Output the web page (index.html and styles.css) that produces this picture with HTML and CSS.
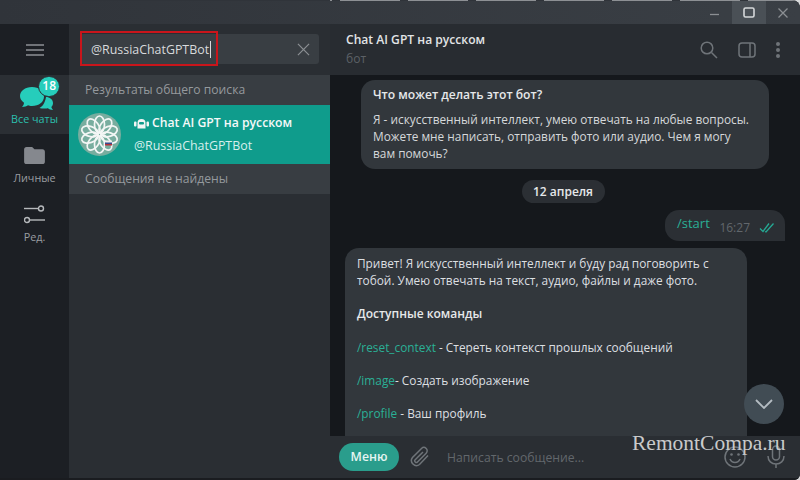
FILE: index.html
```html
<!DOCTYPE html>
<html lang="ru">
<head>
<meta charset="utf-8">
<title>Chat AI GPT на русском</title>
<link rel="stylesheet" href="styles.css">
</head>
<body>
<div class="window">
  <div class="edge-top"></div>
  <header class="titlebar">
    <div class="winbtn"><svg width="12" height="12" viewBox="0 0 12 12"><path d="M1 7.500h9" class="ico-dim"/></svg></div>
    <div class="winbtn winbtn-active"><svg width="14" height="14" viewBox="0 0 14 14"><rect x="2" y="2" width="10" height="9" rx="1.500" class="ico-light"/></svg></div>
    <div class="winbtn"><svg width="12" height="12" viewBox="0 0 12 12"><path d="M1.500 1.500l9 9M10.500 1.500l-9 9" class="ico-dim"/></svg></div>
  </header>
  <div class="main">
    <nav class="rail">
      <div class="rail-menu">
        <svg width="18" height="12" viewBox="0 0 18 12"><path d="M0 1h18M0 6h18M0 11h18" class="ico-menu"/></svg>
      </div>
      <div class="folder folder-active">
        <div class="folder-icon">
          <svg width="38" height="30" viewBox="0 0 38 30"><path d="M12 6c7 0 12 4 12 9.500S19 25 12 25c-2 0-3-.3-4-.7-1.500 1.200-3.500 1.700-6 1.700 1.200-1.200 1.900-2.700 2-4.300-2.400-1.700-4-4-4-6.700C0 10 5 6 12 6z" class="fill-teal" transform="translate(1 0)"/><path d="M27 16c3.500 0 7 2.500 7 6 0 1.700-.6 3-1.700 4 .3 1 1 2 1.700 3-2 0-4-.7-5-1.700-1 .2-6 .5-8.500-.3 3-1.500 5.500-5 6.500-11z" class="fill-teal"/></svg>
          <span class="badge">18</span>
        </div>
        <span class="folder-label">Все чаты</span>
      </div>
      <div class="folder">
        <div class="folder-icon">
          <svg width="21" height="17" viewBox="0 0 22 18"><path d="M2.500 0h6l2.500 2.500h8.500c1.400 0 2.500 1 2.500 2.500v10.500c0 1.400-1 2.500-2.500 2.500h-17C1 18 0 17 0 15.500v-13C0 1 1 0 2.500 0z" class="fill-grey"/></svg>
        </div>
        <span class="folder-label">Личные</span>
      </div>
      <div class="folder">
        <div class="folder-icon">
          <svg width="21" height="19" viewBox="0 0 21 19"><path d="M0 3.500h14" class="ico-rail"/><circle cx="17" cy="3.500" r="2.500" class="ico-rail"/><path d="M6 15h15" class="ico-rail"/><circle cx="3" cy="15" r="2.500" class="ico-rail"/></svg>
        </div>
        <span class="folder-label">Ред.</span>
      </div>
    </nav>

    <aside class="panel">
      <div class="searchbar">
        <div class="searchbox">
          <span class="search-text">@RussiaChatGPTBot</span><span class="caret"></span>
          <svg class="search-clear" width="13" height="13" viewBox="0 0 14 14"><path d="M1 1l12 12M13 1L1 13" class="ico-dim"/></svg>
        </div>
        <div class="highlight"></div>
      </div>
      <div class="section-title">Результаты общего поиска</div>
      <div class="result">
        <div class="avatar">
          <svg width="43" height="43" viewBox="0 0 43 43">
            <circle cx="21.500" cy="21.500" r="21.500" class="avatar-bg"/>
            <g class="knot">
              <ellipse cx="21.500" cy="11.500" rx="5" ry="8.500"/>
              <ellipse cx="21.500" cy="11.500" rx="5" ry="8.500" transform="rotate(36 21.500 21.500)"/>
              <ellipse cx="21.500" cy="11.500" rx="5" ry="8.500" transform="rotate(72 21.500 21.500)"/>
              <ellipse cx="21.500" cy="11.500" rx="5" ry="8.500" transform="rotate(108 21.500 21.500)"/>
              <ellipse cx="21.500" cy="11.500" rx="5" ry="8.500" transform="rotate(144 21.500 21.500)"/>
              <ellipse cx="21.500" cy="11.500" rx="5" ry="8.500" transform="rotate(180 21.500 21.500)"/>
              <ellipse cx="21.500" cy="11.500" rx="5" ry="8.500" transform="rotate(216 21.500 21.500)"/>
              <ellipse cx="21.500" cy="11.500" rx="5" ry="8.500" transform="rotate(252 21.500 21.500)"/>
              <ellipse cx="21.500" cy="11.500" rx="5" ry="8.500" transform="rotate(288 21.500 21.500)"/>
              <ellipse cx="21.500" cy="11.500" rx="5" ry="8.500" transform="rotate(324 21.500 21.500)"/>
            </g>
            <rect x="27" y="27.500" width="7" height="2" fill="#eeeeee"/>
            <rect x="27" y="29.500" width="7" height="1.500" fill="#3a4a8c"/>
            <rect x="27" y="31" width="7" height="1.500" fill="#b5303a"/>
          </svg>
        </div>
        <div class="result-text">
          <div class="result-name">
            <svg width="15" height="12" viewBox="0 0 15 12"><path d="M3.500 6a4 4 0 0 1 8 0v5.500h-8z" class="fill-white"/><rect x="0" y="4.500" width="2.500" height="5" rx="1" class="fill-white"/><rect x="12.500" y="4.500" width="2.500" height="5" rx="1" class="fill-white"/><rect x="5" y="5" width="5" height="2.500" rx="1" class="fill-teal-dark"/></svg>
            <span>Chat AI GPT на русском</span>
          </div>
          <div class="result-user">@RussiaChatGPTBot</div>
        </div>
      </div>
      <div class="section-title">Сообщения не найдены</div>
    </aside>

    <section class="chat">
      <header class="chat-header">
        <div class="chat-title">
          <div class="chat-name">Chat AI GPT на русском</div>
          <div class="chat-status">бот</div>
        </div>
        <div class="chat-actions">
          <svg width="18" height="18" viewBox="0 0 18 18"><circle cx="7" cy="7" r="5.800" class="ico-head"/><path d="M11.500 11.500L17 17" class="ico-head"/></svg>
          <svg width="18" height="16" viewBox="0 0 18 16"><rect x="1" y="1" width="16" height="14" rx="3" class="ico-head"/><path d="M12 1v14" class="ico-head"/></svg>
          <svg width="4" height="16" viewBox="0 0 4 16"><circle cx="2" cy="2" r="2" class="fill-head"/><circle cx="2" cy="8" r="2" class="fill-head"/><circle cx="2" cy="14" r="2" class="fill-head"/></svg>
        </div>
      </header>
      <div class="messages">
        <div class="card">
          <div class="card-title">Что может делать этот бот?</div>
          <div class="card-body">Я - искусственный интеллект, умею отвечать на любые вопросы. Можете мне написать, отправить фото или аудио. Чем я могу вам помочь?</div>
        </div>
        <div class="date-pill">12 апреля</div>
        <div class="outgoing">
          <span class="cmd">/start</span>
          <span class="time">16:27</span>
          <svg width="17" height="11" viewBox="0 0 17 11"><path d="M1 6.500L4 9.500 10 1.500M6 9.500L7 10 14.500 1.500" class="ico-check"/></svg>
        </div>
        <div class="bubble">
          <p>Привет! Я искусственный интеллект и буду рад поговорить с тобой. Умею отвечать на текст, аудио, файлы и даже фото.</p>
          <p class="strong">Доступные команды</p>
          <p><span class="cmd">/reset_context</span> - Стереть контекст прошлых сообщений</p>
          <p><span class="cmd">/image</span>- Создать изображение</p>
          <p><span class="cmd">/profile</span> - Ваш профиль</p>
        </div>
        <button class="scroll-down" type="button" aria-label="Вниз">
          <svg width="18" height="10" viewBox="0 0 18 10"><path d="M1 1l8 8 8-8" class="ico-chev"/></svg>
        </button>
      </div>
      <footer class="composer">
        <span class="menu-btn">Меню</span>
        <svg class="clip" width="20" height="22" viewBox="0 0 20 22"><path d="M18 9.500l-8.500 9a5 5 0 0 1-7-7L11.500 2.500a3.300 3.300 0 0 1 4.700 4.700L7.500 16a1.600 1.600 0 0 1-2.300-2.300L13 6" class="ico-head"/></svg>
        <span class="placeholder">Написать сообщение...</span>
        <svg class="smile" width="22" height="22" viewBox="0 0 22 22"><circle cx="11" cy="11" r="10" class="ico-head"/><circle cx="7.500" cy="8.500" r="1.300" class="fill-head"/><circle cx="14.500" cy="8.500" r="1.300" class="fill-head"/><path d="M6 13c1 2.500 3 3.500 5 3.500s4-1 5-3.500" class="ico-head"/></svg>
        <svg class="mic" width="18" height="24" viewBox="0 0 18 24"><rect x="5.500" y="1" width="7" height="14" rx="3.500" class="ico-head"/><path d="M1 11c0 5 3.500 8 8 8s8-3 8-8M9 19v4" class="ico-head"/></svg>
      </footer>
    </section>
  </div>
  <div class="edge-bottom"></div>
  <div class="watermark">RemontCompa.ru</div>
</div>
</body>
</html>
```
FILE: styles.css
```css
* { box-sizing: border-box; }
html, body { margin: 0; padding: 0; height: 100%; background: #d9dadb; }
body { font-family: "Open Sans", "Noto Sans", sans-serif; font-size: 13px; color: #e6e8ea; overflow: hidden; }
svg { display: block; flex: none; fill: none; }

.window { position: relative; width: 800px; height: 480px; background: #15181c; border-radius: 0 8px 6px 0; overflow: hidden; display: flex; flex-direction: column; }
.edge-top { height: 1px; flex: none; background: linear-gradient(90deg, #30343a 330px, rgba(0,0,0,0) 330px), repeating-linear-gradient(90deg, #8d9094 0 60px, #30343a 60px 68px); }
.edge-bottom { height: 2px; flex: none; background: #1a1c20; }

.titlebar { height: 23px; flex: none; display: flex; justify-content: flex-end; background: linear-gradient(90deg, #30343a, #3a3f45); }
.winbtn { width: 34px; display: flex; align-items: center; justify-content: center; }
.winbtn-active { background: #4a5056; }

.ico-dim { stroke: #8b8f93; stroke-width: 1.300; }
.ico-light { stroke: #d5d8da; stroke-width: 1.600; }
.ico-menu { stroke: #8c9094; stroke-width: 1.400; }
.ico-rail { stroke: #b6b9bc; stroke-width: 1.400; }
.ico-head { stroke: #6f7479; stroke-width: 1.500; }
.ico-check { stroke: #25a893; stroke-width: 1.300; }
.ico-chev { stroke: #b4bcc2; stroke-width: 1.800; }
.fill-teal { fill: #26cdbb; }
.fill-teal-dark { fill: #0f9c8c; }
.fill-grey { fill: #85888e; }
.fill-white { fill: #f2f5f5; }
.fill-head { fill: #6f7479; }

.main { flex: 1; min-height: 0; display: flex; }

.rail { width: 69px; flex: none; background: #1c1f24; display: flex; flex-direction: column; align-items: stretch; }
.rail-menu { height: 51px; display: flex; align-items: center; justify-content: center; }
.folder { height: 59px; display: flex; flex-direction: column; align-items: center; justify-content: flex-end; padding-bottom: 8px; }
.folder-active { background: #2b2f34; }
.folder-icon { position: relative; height: 30px; display: flex; align-items: center; justify-content: center; }
.folder-label { font-size: 10.800px; line-height: 15px; color: #9a9da1; }
.folder-active .folder-label { color: #2bbfad; }
.folder-active .folder-icon { margin-right: -7px; }
.badge { position: absolute; top: -5px; right: -3px; min-width: 21px; height: 21px; padding: 0 3px; border-radius: 11px; background: #26cdbb; border: 1.500px solid #2b2f34; color: #fff; font-size: 12px; font-weight: 600; line-height: 18px; text-align: center; }

.panel { width: 261px; flex: none; background: #2a2e33; display: flex; flex-direction: column; }
.searchbar { position: relative; height: 51px; padding: 10px 11px 11px 11px; }
.searchbox { height: 30px; background: #393e43; border-radius: 3px; display: flex; align-items: center; padding: 0 8px 0 11px; }
.search-text { font-size: 12.400px; color: #d8dadc; }
.caret { width: 1px; height: 17px; background: #d8dadc; margin-left: 1px; }
.search-clear { margin-left: auto; margin-right: 1px; }
.highlight { position: absolute; left: 11px; top: 7px; width: 138px; height: 35px; border: 2px solid #c9151b; }

.section-title { height: 30px; background: #383d42; color: #95999d; font-size: 12.150px; line-height: 30px; padding-left: 16px; }
.result { height: 59px; background: #0f9c8c; display: flex; align-items: center; padding-left: 9px; }
.avatar { width: 43px; height: 43px; flex: none; margin-right: 13px; }
.avatar-bg { fill: #78ad9f; }
.knot ellipse { fill: none; stroke: #f3f6f5; stroke-width: 1.700; }
.result-text { display: flex; flex-direction: column; gap: 5px; }
.result-name { display: flex; align-items: center; gap: 3px; font-weight: 600; font-size: 12.200px; line-height: 18px; color: #f5f8f8; }
.result-user { font-size: 12.400px; line-height: 18px; color: #d7efec; }

.chat { flex: 1; min-width: 0; display: flex; flex-direction: column; }
.chat-header { height: 51px; flex: none; background: #282c31; display: flex; align-items: center; justify-content: space-between; padding: 0 20px 0 16px; }
.chat-title { display: flex; flex-direction: column; gap: 1px; }
.chat-name { font-size: 12.100px; line-height: 18px; font-weight: 600; color: #e2e4e6; }
.chat-status { font-size: 12.100px; line-height: 18px; color: #5c6166; }
.chat-actions { display: flex; align-items: center; gap: 20px; }

.messages { position: relative; flex: 1; min-height: 0; overflow: hidden; display: flex; flex-direction: column; align-items: flex-start; padding: 5px 15px 0; background: #15181c; }
.card { margin-left: 16px; width: 408px; height: 89px; padding: 6px 14px 6px 12px; background: #32373c; border-radius: 14px; flex: none; }
.card-title { font-weight: 600; font-size: 12.100px; line-height: 18px; color: #e6e8ea; }
.card-body { margin-top: 7px; font-size: 11.850px; line-height: 17px; color: #d5d8da; }
.date-pill { align-self: center; margin-top: 11px; margin-left: -4px; width: 83px; height: 23px; border-radius: 12px; background: #2b2f34; font-size: 12px; font-weight: 600; line-height: 23px; text-align: center; color: #e6e8ea; flex: none; }
.outgoing { align-self: flex-end; margin-top: 7px; height: 31px; width: 120px; padding: 0 9px 0 12px; border-radius: 14px 14px 0 14px; background: #2b2f34; display: flex; align-items: center; flex: none; }
.outgoing .cmd { margin-top: -5px; }
.time { font-size: 12px; color: #62676c; margin-left: auto; margin-right: 9px; margin-top: 4px; }
.outgoing svg { margin-top: 4px; }
.cmd { color: #2ab096; }
.bubble { margin-top: 7px; width: 402px; flex: none; padding: 7px 12px 20px; background: #32373c; border-radius: 14px; font-size: 11.850px; line-height: 17px; color: #dcdfe1; }
.bubble p { margin: 0 0 16.300px; }
.bubble .strong { font-size: 12px; font-weight: 600; color: #e6e8ea; }
.scroll-down { position: absolute; right: 16px; top: 309px; width: 40px; height: 40px; padding: 0; border: 0; border-radius: 50%; background: #414c54; display: flex; align-items: center; justify-content: center; }

.composer { height: 42px; flex: none; background: #2a2e33; display: flex; align-items: center; padding: 0 15px 0 9px; }
.menu-btn { width: 60px; height: 28px; border-radius: 14px; background: #2a9d8c; color: #e6f5f2; font-weight: 600; font-size: 12.300px; line-height: 28px; text-align: center; }
.clip { margin-left: 11px; }
.placeholder { margin-left: 17px; font-size: 12.200px; color: #62676c; }
.smile { margin-left: auto; margin-right: 21px; }
.watermark { position: absolute; left: 632px; top: 430px; font-family: "Liberation Serif", serif; font-size: 21.500px; line-height: 26px; color: #c9cacb; }
```
